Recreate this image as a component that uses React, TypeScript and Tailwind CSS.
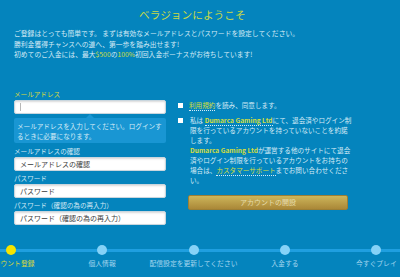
const steps = ['アカウント登録', '個人情報', '配信設定を更新してください', '入金する', '今すぐプレイ'];

function Field({ label, placeholder, accent = false }: { label: string; placeholder?: string; accent?: boolean }) {
  return (
    <div className="mt-[3px] first:mt-0">
      <div className={`text-[6.6px] leading-[8px] ${accent ? 'text-[#d9da3c]' : 'text-[#d3e9f5]'}`}>{label}</div>
      <div className="mt-[2px] h-[14px] rounded-[2px] bg-white border border-[#c9d6de] shadow-[inset_0_1px_2px_rgba(0,0,0,0.15)] flex items-center px-[5px]">
        {placeholder ? (
          <span className="text-[7px] text-[#3a3a3a] leading-none">{placeholder}</span>
        ) : (
          <span className="w-px h-[8px] bg-[#b8b8b8]" />
        )}
      </div>
    </div>
  );
}

export default function App() {
  return (
    <div
      className="w-[400px] h-[277px] overflow-hidden bg-[#0484bd] text-[#d6ebf6]"
      style={{ fontFamily: '"Noto Sans CJK JP", "Noto Sans", sans-serif' }}
    >
      {/* Header */}
      <div className="pt-[9px] px-[14px]">
        <h1 className="text-[10.7px] leading-[12px] text-[#c9da44] pl-[125px]">ベラジョンにようこそ</h1>
        <p className="mt-[7px] text-[6.8px] leading-[10.7px] whitespace-nowrap">
          ご登録はとっても簡単です。 まずは有効なメールアドレスとパスワードを設定してください。
          <br />
          勝利金獲得チャンスへの道へ、第一歩を踏み出せます!
          <br />
          初めてのご入金には、最大<span className="text-[#cfdf3a]">$500</span>の<span className="text-[#cfdf3a]">100%</span>初回入金ボーナスがお待ちしています!
        </p>
      </div>

      {/* Form */}
      <div className="mt-[30px] px-[14px] flex">
        <div className="w-[152px]">
          <Field label="メールアドレス" accent />
          <div className="relative mt-[4px] rounded-[2px] bg-[#1996d3] px-[3px] py-[2.5px] text-[6.6px] leading-[10px] whitespace-nowrap">
            <span className="absolute -top-[4px] left-[72px] w-0 h-0 border-l-[4px] border-r-[4px] border-b-[4px] border-l-transparent border-r-transparent border-b-[#1996d3]" />
            メールアドレスを入力してください。ログインす
            <br />
            るときに必要になります。
          </div>
          <div className="mt-[4px]">
            <Field label="メールアドレスの確認" placeholder="メールアドレスの確認" />
            <Field label="パスワード" placeholder="パスワード" />
            <Field label="パスワード（確認の為の再入力）" placeholder="パスワード（確認の為の再入力）" />
          </div>
        </div>

        <div className="ml-[12px] w-[172px] pt-[10px]">
          <div className="flex items-center gap-[6px] text-[6.6px] leading-[10px]">
            <span className="w-[5px] h-[5px] bg-white shrink-0" />
            <span>
              <span className="text-[#d4df3c] border-b border-dotted border-[#d6ebf6]">利用規約</span>を読み、同意します。
            </span>
          </div>
          <div className="mt-[5px] flex gap-[7px] text-[6.6px] leading-[10px]">
            <span className="mt-[2.5px] w-[5px] h-[5px] bg-white shrink-0" />
            <div className="whitespace-nowrap">
              私は <span className="text-[#d4df3c] font-bold border-b border-dotted border-[#d6ebf6]">Dumarca Gaming Ltd</span>にて、退会済やログイン制
              <br />
              限を行っているアカウントを持っていないことを約諾
              <br />
              します。
              <br />
              <span className="text-[#d4df3c] font-bold">Dumarca Gaming Ltd</span>が運営する他のサイトにて退会
              <br />
              済やログイン制限を行っているアカウントをお持ちの
              <br />
              場合は、<span className="text-[#d4df3c] border-b border-dotted border-[#d6ebf6]">カスタマーサポート</span>までお問い合わせくださ
              <br />
              い。
            </div>
          </div>
          <button className="mt-[10px] ml-[10px] w-[160px] h-[15px] rounded-[2px] bg-gradient-to-b from-[#cdb65a] to-[#aa8838] border border-[#9c7f35] text-[7px] leading-none text-[#e6dcac]">
            アカウントの開設
          </button>
        </div>
      </div>

      {/* Steps */}
      <div className="mt-[20px] relative">
        <div className="absolute left-0 right-0 top-[4px] h-[3px] bg-[#1f9fe0]" />
        <div className="relative flex w-[457px] -ml-[35px]">
          {steps.map((s, i) => (
            <div key={s} className="flex-1 flex flex-col items-center">
              <span className={`w-[10px] h-[10px] rounded-full ${i === 0 ? 'bg-[#f6e400]' : 'bg-[#86d2f7]'}`} />
              <span className={`mt-[4px] text-[6.8px] leading-[8px] whitespace-nowrap ${i === 0 ? 'text-[#d9d83e]' : 'text-[#a3d5ee]'}`}>{s}</span>
            </div>
          ))}
        </div>
      </div>
    </div>
  );
}
